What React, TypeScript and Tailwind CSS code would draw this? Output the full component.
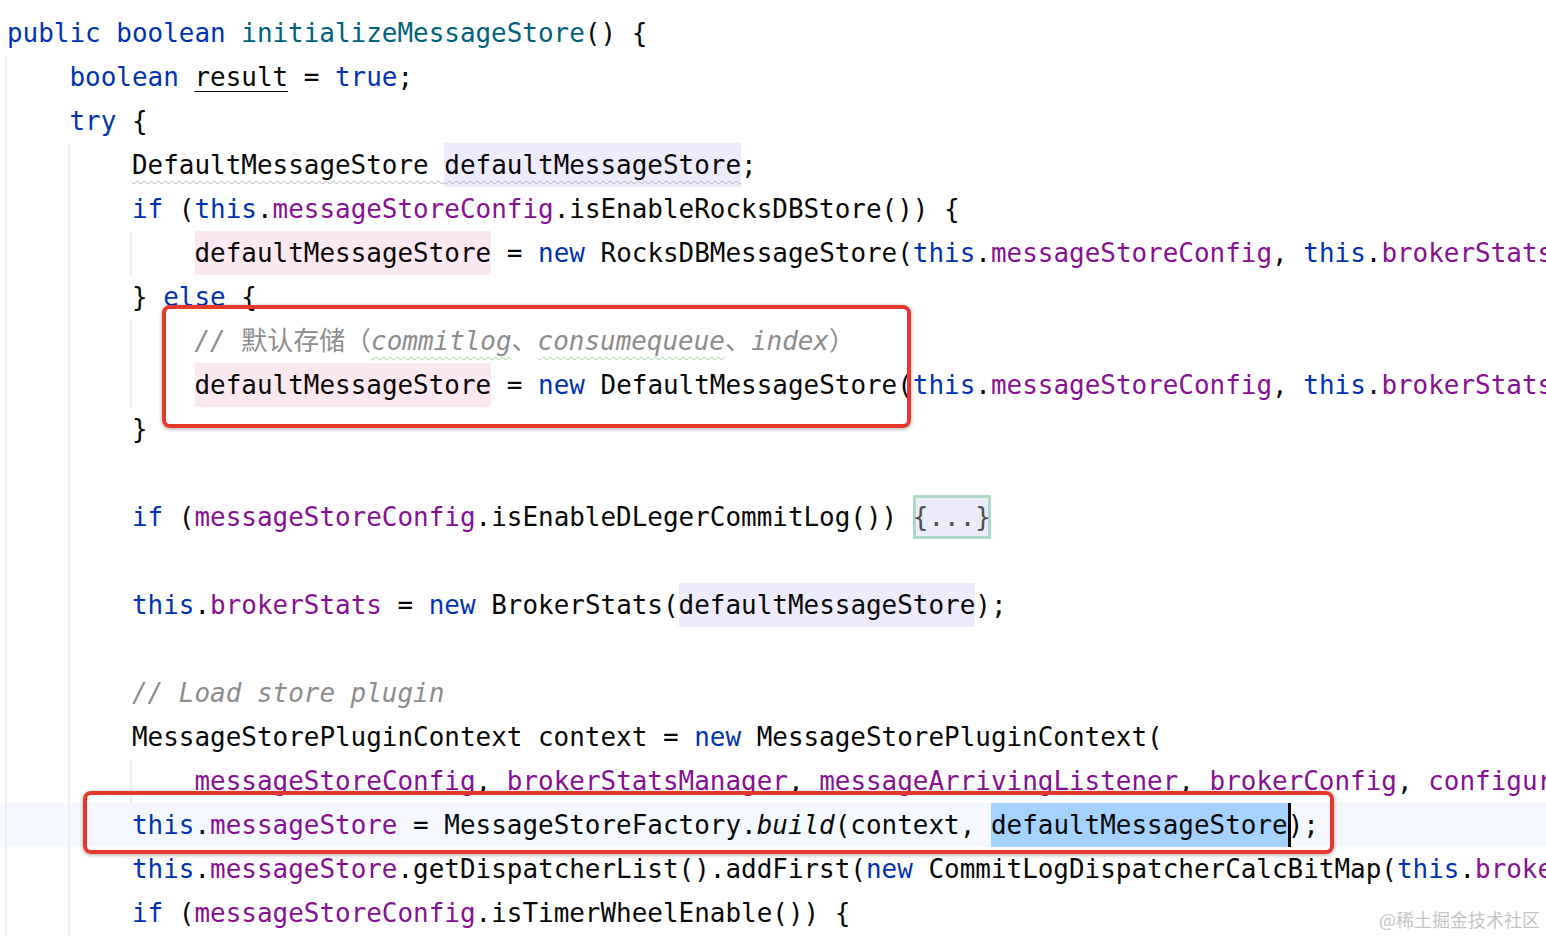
type Seg = string | [string, string];
type Line = { lvl: number; segs: Seg[]; current?: boolean };

const K = "text-[#0033b3]";
const M = "text-[#00627a]";
const F = "text-[#871094]";
const CM = "text-[#8c8c8c] italic";
const CJK = "text-[#8c8c8c] not-italic";
const READ = "inline-block h-[44px] bg-[#edebfc]";
const WRITE = "inline-block h-[44px] bg-[#fce8f1]";

const lines: Line[] = [
  { lvl: 0, segs: [["public", K], " ", ["boolean", K], " ", ["initializeMessageStore", M], "() {"] },
  { lvl: 1, segs: [["boolean", K], " ", ["result", "underline decoration-1 underline-offset-[5px]"], " = ", ["true", K], ";"] },
  { lvl: 1, segs: [["try", K], " {"] },
  {
    lvl: 2,
    segs: [
      ["DefaultMessageStore ", "underline decoration-wavy decoration-[#b4b4b4] decoration-1 underline-offset-[6px]"],
      ["defaultMessageStore", READ + " underline decoration-wavy decoration-[#b4b4b4] decoration-1 underline-offset-[6px]"],
      ";",
    ],
  },
  { lvl: 2, segs: [["if", K], " (", ["this", K], ".", ["messageStoreConfig", F], ".isEnableRocksDBStore()) {"] },
  {
    lvl: 3,
    segs: [
      ["defaultMessageStore", WRITE],
      " = ",
      ["new", K],
      " RocksDBMessageStore(",
      ["this", K],
      ".",
      ["messageStoreConfig", F],
      ", ",
      ["this", K],
      ".",
      ["brokerStatsManager", F],
      ", ",
      ["this", K],
      ".",
      ["messageArrivingListener", F],
      ");",
    ],
  },
  { lvl: 2, segs: ["} ", ["else", K], " {"] },
  {
    lvl: 3,
    segs: [
      ["// ", CM],
      ["默认存储（", CJK],
      ["commitlog", CM + " underline decoration-wavy decoration-[#9ed49e] decoration-1 underline-offset-[6px]"],
      ["、", CJK],
      ["consumequeue", CM + " underline decoration-wavy decoration-[#9ed49e] decoration-1 underline-offset-[6px]"],
      ["、", CJK],
      ["index", CM],
      ["）", CJK],
    ],
  },
  {
    lvl: 3,
    segs: [
      ["defaultMessageStore", WRITE],
      " = ",
      ["new", K],
      " DefaultMessageStore(",
      ["this", K],
      ".",
      ["messageStoreConfig", F],
      ", ",
      ["this", K],
      ".",
      ["brokerStatsManager", F],
      ", ",
      ["this", K],
      ".",
      ["messageArrivingListener", F],
      ");",
    ],
  },
  { lvl: 2, segs: ["}"] },
  { lvl: 2, segs: [] },
  {
    lvl: 2,
    segs: [
      ["if", K],
      " (",
      ["messageStoreConfig", F],
      ".isEnableDLegerCommitLog()) ",
      ["{...}", "inline-block h-[44px] bg-[#ebebf9] text-[#4f4f4f] shadow-[inset_0_0_0_3px_#acdac8]"],
    ],
  },
  { lvl: 2, segs: [] },
  {
    lvl: 2,
    segs: [["this", K], ".", ["brokerStats", F], " = ", ["new", K], " BrokerStats(", ["defaultMessageStore", READ], ");"],
  },
  { lvl: 2, segs: [] },
  { lvl: 2, segs: [["// Load store plugin", CM]] },
  {
    lvl: 2,
    segs: ["MessageStorePluginContext context = ", ["new", K], " MessageStorePluginContext("],
  },
  {
    lvl: 3,
    segs: [
      ["messageStoreConfig", F],
      ", ",
      ["brokerStatsManager", F],
      ", ",
      ["messageArrivingListener", F],
      ", ",
      ["brokerConfig", F],
      ", ",
      ["configuration", F],
      ");",
    ],
  },
  {
    lvl: 2,
    current: true,
    segs: [
      ["this", K],
      ".",
      ["messageStore", F],
      " = MessageStoreFactory.",
      ["build", "italic"],
      "(context, ",
      ["defaultMessageStore", "inline-block h-[44px] bg-[#a6d2ff] shadow-[3px_0_0_#000]"],
      ");",
    ],
  },
  {
    lvl: 2,
    segs: [
      ["this", K],
      ".",
      ["messageStore", F],
      ".getDispatcherList().addFirst(",
      ["new", K],
      " CommitLogDispatcherCalcBitMap(",
      ["this", K],
      ".",
      ["brokerConfig", F],
      ", ",
      ["this", K],
      ".",
      ["consumerFilterManager", F],
      "));",
    ],
  },
  { lvl: 2, segs: [["if", K], " (", ["messageStoreConfig", F], ".isTimerWheelEnable()) {"] },
];

const CodeLine = ({ line }: { line: Line }) => {
  return (
    <div className={`flex h-[44px] pl-[5px] ${line.current ? "bg-[#f5f8fe]" : ""}`}>
      {Array.from({ length: line.lvl }).map((_, i) => (
        <div key={i} className="w-[62.5px] h-full shrink-0 border-l-2 border-[#eeeeee]" />
      ))}
      <div className="pl-[2px] leading-[44px] whitespace-pre">
        {line.segs.map((s, i) =>
          typeof s === "string" ? (
            <span key={i}>{s}</span>
          ) : (
            <span key={i} className={s[1]}>
              {s[0]}
            </span>
          ),
        )}
      </div>
    </div>
  );
};

const App = () => {
  return (
    <div className="relative w-[1546px] h-[936px] overflow-hidden bg-white text-[#080808] text-[25.95px] font-['DejaVu_Sans_Mono','Noto_Sans_CJK_SC',monospace]">
      <div className="pt-[11px]">
        {lines.map((l, i) => (
          <CodeLine key={i} line={l} />
        ))}
      </div>

      {/* annotation boxes */}
      <div className="absolute left-[162px] top-[305px] w-[749px] h-[123px] border-4 border-[#e3382b] rounded-[8px] shadow-[0_1px_4px_rgba(0,0,0,0.35)]" />
      <div className="absolute left-[83px] top-[791px] w-[1251px] h-[63px] border-4 border-[#e3382b] rounded-[8px] shadow-[0_1px_4px_rgba(0,0,0,0.35)]" />

      <div className="absolute right-[6px] bottom-[6px] text-[18px] leading-[22px] text-[#c4c4c4] font-['Noto_Sans_CJK_SC',sans-serif]">
        @稀土掘金技术社区
      </div>
    </div>
  );
};

export default App;
